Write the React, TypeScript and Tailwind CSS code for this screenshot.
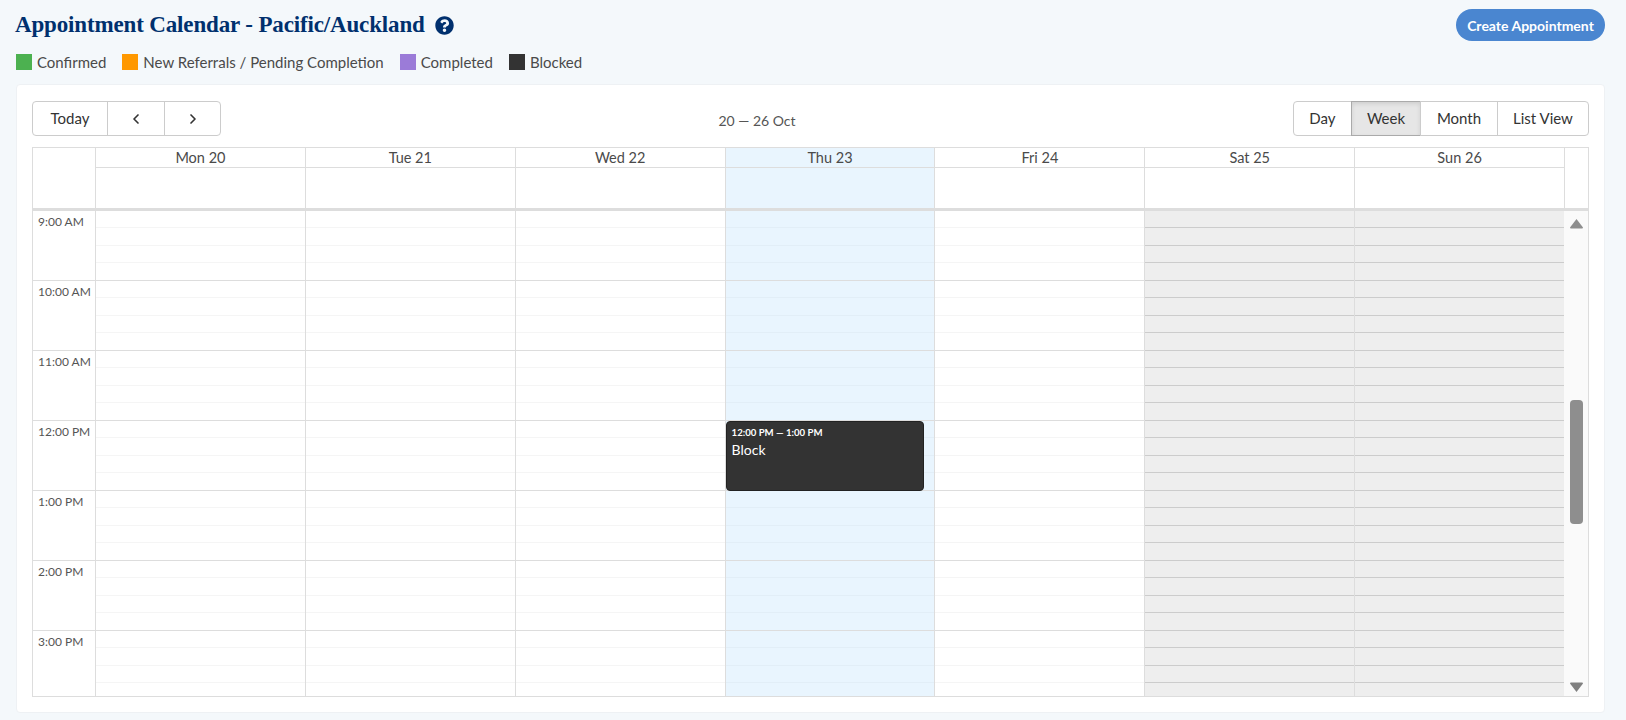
import { FaQuestionCircle } from "react-icons/fa";
import { ChevronLeft, ChevronRight } from "lucide-react";

const days = [
  { label: "Mon 20" },
  { label: "Tue 21" },
  { label: "Wed 22" },
  { label: "Thu 23", today: true },
  { label: "Fri 24" },
  { label: "Sat 25", off: true },
  { label: "Sun 26", off: true },
];

const hours = ["9:00 AM", "10:00 AM", "11:00 AM", "12:00 PM", "1:00 PM", "2:00 PM", "3:00 PM"];

const legend = [
  { label: "Confirmed", color: "bg-[#4cb150]" },
  { label: "New Referrals / Pending Completion", color: "bg-[#ff9800]" },
  { label: "Completed", color: "bg-[#9b7bd8]" },
  { label: "Blocked", color: "bg-[#333333]" },
];

function HourSlots({ off, today }: { off?: boolean; today?: boolean }) {
  const minor = off ? "border-[#cccccc]" : today ? "border-[#e2eef7]" : "border-[#f5f5f5]";
  return (
    <div className={`h-[70px] shrink-0 border-b ${off ? "border-[#cccccc]" : "border-[#dddddd]"}`}>
      <div className={`h-[17px] border-b ${minor}`} />
      <div className={`h-[18px] border-b ${minor}`} />
      <div className={`h-[17px] border-b ${minor}`} />
    </div>
  );
}

export default function App() {
  return (
    <div
      className="h-[720px] overflow-hidden bg-[#f4f8fb] pl-4 pr-[21px] pt-[9px] text-[#4a4a4a]"
      style={{ fontFamily: "Lato, 'Noto Sans', sans-serif" }}
    >
      <div className="flex h-8 items-center justify-between">
        <div className="-ml-px flex items-center gap-[10px]">
          <h1
            className="text-[23px] font-bold leading-8 tracking-[-0.15px] text-[#00306e]"
            style={{ fontFamily: "'Liberation Serif', serif" }}
          >
            Appointment Calendar - Pacific/Auckland
          </h1>
          <FaQuestionCircle className="text-[19px] text-[#00306e]" />
        </div>
        <button
          type="button"
          className="h-8 w-[149px] rounded-full bg-[#4a86d0] text-[14px] font-bold text-white"
        >
          Create Appointment
        </button>
      </div>

      <div className="mt-3 flex h-[18px] items-center gap-4">
        {legend.map((item) => (
          <div key={item.label} className="flex items-center gap-[5px]">
            <span className={`h-4 w-4 ${item.color}`} />
            <span className="text-[15px] leading-[18px]">{item.label}</span>
          </div>
        ))}
      </div>

      <div className="mt-[13px] h-[629px] rounded-[4px] border border-[#eef1f4] bg-white px-[15px] pt-4">
        <div className="flex h-[35px] items-center justify-between">
          <div className="flex h-[35px] text-[15px] text-[#333333]">
            <button type="button" className="w-[76px] rounded-l-[4px] border border-[#cccccc]">
              Today
            </button>
            <button type="button" className="-ml-px flex w-[58px] items-center justify-center border border-[#cccccc]">
              <ChevronLeft size={16} strokeWidth={2.5} />
            </button>
            <button type="button" className="-ml-px flex w-[57px] items-center justify-center rounded-r-[4px] border border-[#cccccc]">
              <ChevronRight size={16} strokeWidth={2.5} />
            </button>
          </div>
          <div className="pt-[3px] text-[14px] text-[#555555]">20 — 26 Oct</div>
          <div className="flex h-[35px] text-[15px] text-[#333333]">
            <button type="button" className="w-[59px] rounded-l-[4px] border border-[#cccccc]">
              Day
            </button>
            <button type="button" className="-ml-px w-[70px] border border-[#aaaaaa] bg-[#e6e6e6] shadow-[inset_0_2px_4px_rgba(0,0,0,0.1)]">
              Week
            </button>
            <button type="button" className="-ml-px w-[78px] border border-[#cccccc]">
              Month
            </button>
            <button type="button" className="-ml-px w-[92px] rounded-r-[4px] border border-[#cccccc]">
              List View
            </button>
          </div>
        </div>

        <div className="mt-[11px] border border-[#dddddd]">
          <div className="flex h-[63px] border-b-[3px] border-[#dddddd]">
            <div className="w-[63px] shrink-0 border-r border-[#dddddd]" />
            {days.map((d) => (
              <div
                key={d.label}
                className={`flex flex-1 flex-col border-r border-[#dddddd] ${d.today ? "bg-[#e9f5fe]" : ""}`}
              >
                <div className="h-5 shrink-0 border-b border-[#dddddd] text-center text-[14.5px] leading-[20px]">
                  {d.label}
                </div>
              </div>
            ))}
            <div className="w-[23px] shrink-0" />
          </div>

          <div className="flex h-[485px] overflow-hidden">
            <div className="w-[63px] shrink-0 border-r border-[#dddddd]">
              {hours.map((h) => (
                <div key={h} className="h-[70px] whitespace-nowrap border-b border-[#dddddd] pl-[5px] pt-[2px] text-[12px] leading-[18px] text-[#555555]">
                  {h}
                </div>
              ))}
            </div>
            {days.map((d, i) => (
              <div
                key={d.label}
                className={`relative flex flex-1 flex-col ${i < 6 ? "border-r border-[#dddddd]" : ""} ${d.today ? "bg-[#e9f5fe]" : ""} ${d.off ? "bg-[#eeeeee]" : ""}`}
              >
                {hours.map((h) => (
                  <HourSlots key={h} off={d.off} today={d.today} />
                ))}
                {d.today && (
                  <div className="absolute left-0 right-[10px] top-[210px] h-[70px] rounded-[4px] border border-[#222222] bg-[#333333] pl-[5px] pt-[2px] text-white">
                    <div className="text-[9.6px] font-bold leading-[18px]">12:00 PM — 1:00 PM</div>
                    <div className="text-[14px] leading-[15px]">Block</div>
                  </div>
                )}
              </div>
            ))}
            <div className="flex w-[24px] shrink-0 flex-col items-center bg-[#fafafa] pb-[3px] pt-[7px]">
              <svg width="15" height="11" viewBox="0 0 15 11" className="text-[#8e8e8e]">
                <path d="M7.5 1 L14 9.5 Q14 10.5 13 10.5 L2 10.5 Q1 10.5 1 9.5 Z" fill="currentColor" />
              </svg>
              <div className="mt-[171px] h-[124px] w-[13px] rounded-[4px] bg-[#8e8e8e]" />
              <div className="flex-1" />
              <svg width="15" height="11" viewBox="0 0 15 11" className="text-[#808080]">
                <path d="M7.5 10 L14 1.5 Q14 .5 13 .5 L2 .5 Q1 .5 1 1.5 Z" fill="currentColor" />
              </svg>
            </div>
          </div>
        </div>
      </div>
    </div>
  );
}
